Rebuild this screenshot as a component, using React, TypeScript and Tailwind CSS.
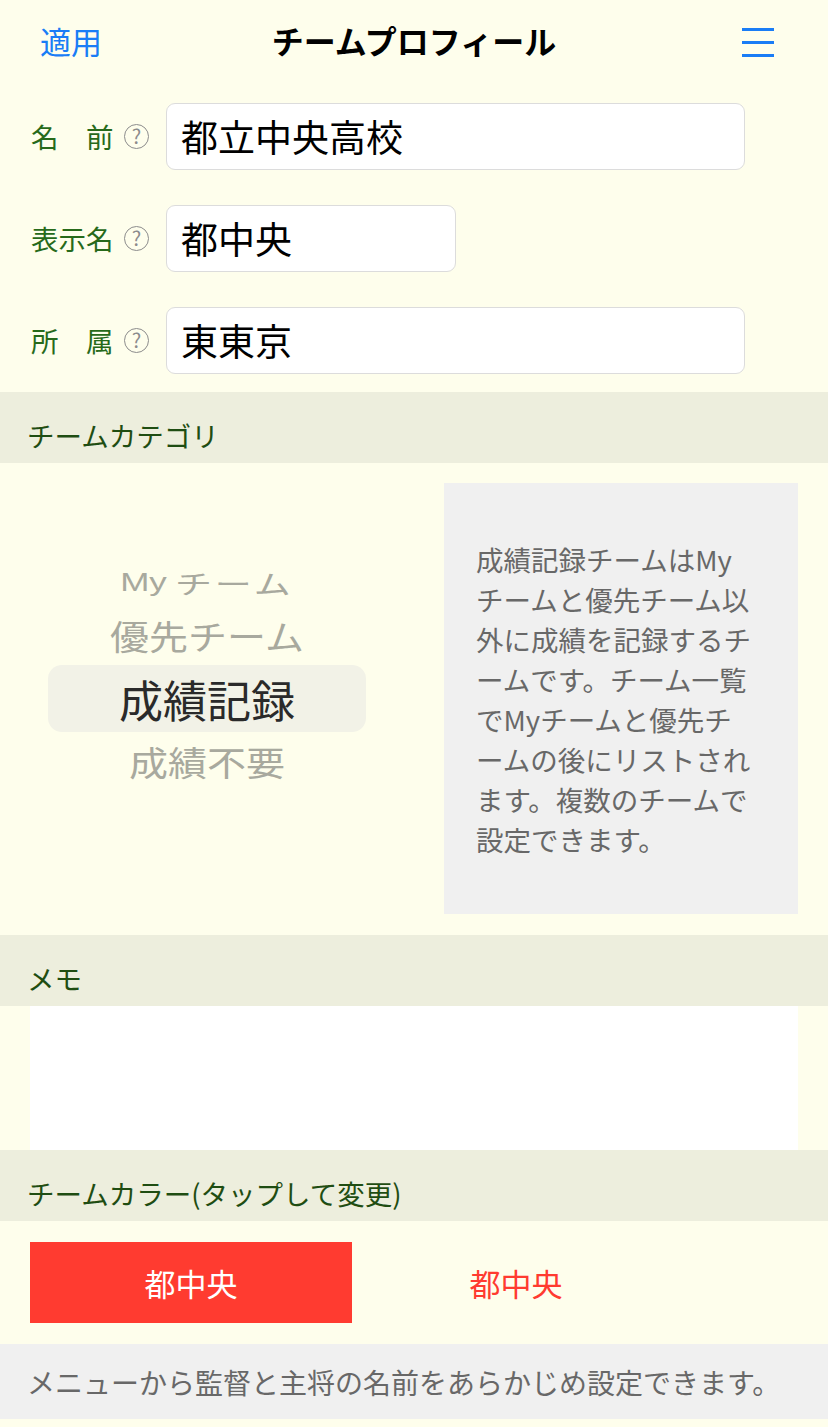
import React from "react";

const FONT = "font-['Noto_Sans_CJK_JP','Noto_Sans',sans-serif]";

function Help() {
  return (
    <span className="ml-[9px] flex h-[25px] w-[25px] shrink-0 items-center justify-center rounded-full border border-[#8c8c8c] pb-[1px] text-[20px] leading-none text-[#8c8c8c]">
      ?
    </span>
  );
}

function Row({ label, value, wide }: { label: string; value: string; wide: boolean }) {
  return (
    <div className="flex h-[67px] items-center pl-[31px]">
      <span className="w-[84px] whitespace-pre text-[27.5px] leading-none text-[#276a1a]">{label}</span>
      <Help />
      <div
        className={`ml-[17px] flex h-[67px] items-center rounded-[9px] border border-[#dcdcdc] bg-white pl-[14px] text-[37px] leading-none text-black ${
          wide ? "w-[579px]" : "w-[290px]"
        }`}
      >
        {value}
      </div>
    </div>
  );
}

function SectionHeader({ title }: { title: string }) {
  return (
    <div className="flex h-[71px] items-end bg-[#edeedd] pb-[8px] pl-[27px] text-[27.5px] leading-[40px] text-[#1f4d12]">
      {title}
    </div>
  );
}

export default function App() {
  const info = [
    "成績記録チームはMy",
    "チームと優先チーム以",
    "外に成績を記録するチ",
    "ームです。チーム一覧",
    "でMyチームと優先チ",
    "ームの後にリストされ",
    "ます。複数のチームで",
    "設定できます。",
  ];
  return (
    <div className={`min-h-[1427px] w-[828px] bg-[#fefeec] ${FONT}`}>
      {/* header */}
      <div className="flex h-[84px] items-center pb-[4px]">
        <div className="w-[200px] pl-[40px] text-[31px] leading-none text-[#1a7df6]">適用</div>
        <div className="flex-1 text-center text-[32px] font-bold leading-none text-black">チームプロフィール</div>
        <div className="flex w-[200px] justify-end pr-[54px]">
          <div className="flex w-[32px] flex-col gap-[10px] pt-[4px]">
            <span className="h-[3px] w-full bg-[#1a7df6]" />
            <span className="h-[3px] w-full bg-[#1a7df6]" />
            <span className="h-[3px] w-full bg-[#1a7df6]" />
          </div>
        </div>
      </div>

      {/* form */}
      <div className="flex flex-col gap-[35px] pb-[18px] pt-[19px]">
        <Row label={"名　前"} value="都立中央高校" wide />
        <Row label="表示名" value="都中央" wide={false} />
        <Row label={"所　属"} value="東東京" wide />
      </div>

      <SectionHeader title="チームカテゴリ" />

      {/* category */}
      <div className="flex h-[472px]">
        <div className="w-[444px] pl-[48px]">
          <div className="flex w-[318px] flex-col items-center pt-[96px] text-[#a8a99e]">
            <div className="flex h-[46px] items-center text-[37px] leading-none [transform:scaleY(0.72)]">
              <span className="font-['Liberation_Sans',sans-serif] text-[35px] font-medium">My</span>
              <span className="ml-[8px] tracking-[3px]">チーム</span>
            </div>
            <div className="flex h-[60px] items-center text-[39px] leading-none [transform:scaleY(0.88)]">
              優先チーム
            </div>
            <div className="flex h-[67px] w-full items-center justify-center rounded-[14px] bg-[#f2f2e7] text-[44px] leading-none text-[#2a2a2a]">
              成績記録
            </div>
            <div className="flex h-[58px] items-center text-[39px] leading-none [transform:scaleY(0.88)]">
              成績不要
            </div>
          </div>
        </div>
        <div className="mt-[20px] mb-[21px] flex w-[354px] flex-col justify-center bg-[#f0f0f0] pl-[32px] text-[27.5px] leading-[40px] text-[#686868]">
          {info.map((l, i) => (
            <div key={i} className="whitespace-nowrap">
              {l}
            </div>
          ))}
        </div>
      </div>

      <SectionHeader title="メモ" />
      <div className="px-[30px]">
        <div className="h-[144px] bg-white" />
      </div>

      <SectionHeader title="チームカラー(タップして変更)" />
      <div className="flex h-[123px] items-start px-[30px] pt-[21px]">
        <div className="flex h-[81px] w-[322px] items-center justify-center bg-[#ff3b30] text-[31px] leading-none text-white">
          都中央
        </div>
        <div className="flex h-[81px] w-[322px] items-center justify-center pl-[6px] text-[31px] leading-none text-[#ff3b30]">
          都中央
        </div>
      </div>

      <div className="flex h-[75px] items-center bg-[#f0f0f0] pl-[27px] text-[28px] leading-none text-[#686868]">
        メニューから監督と主将の名前をあらかじめ設定できます。
      </div>
    </div>
  );
}
